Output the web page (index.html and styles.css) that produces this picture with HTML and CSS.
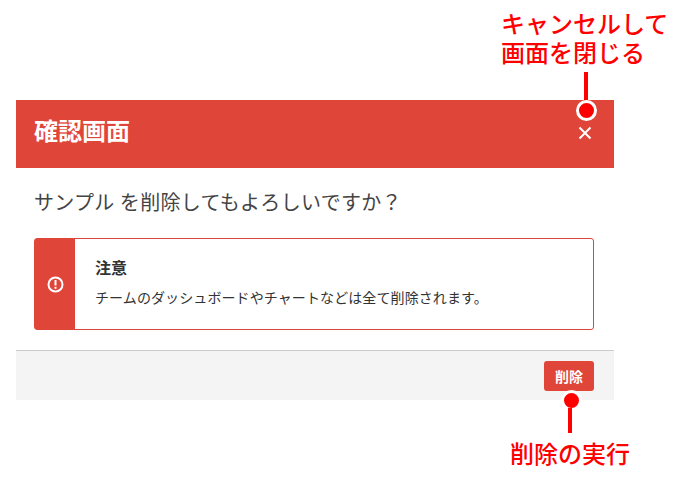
FILE: index.html
```html
<!DOCTYPE html>
<html lang="ja">
<head>
  <meta charset="UTF-8" />
  <meta name="viewport" content="width=device-width, initial-scale=1.0"/>
  <title>確認画面</title>
  <link rel="stylesheet" href="styles.css">
</head>
<body>
  <div class="modal">
    <div class="modal-header">
      <h1>確認画面</h1>
      <svg class="close-icon" width="14" height="14" viewBox="0 0 14 14">
        <path d="M1.5 1.5 L12.5 12.5 M12.5 1.5 L1.5 12.5" stroke="#fff" stroke-width="2" fill="none"/>
      </svg>
    </div>
    <div class="modal-body">
      <p class="question">サンプル を削除してもよろしいですか？</p>
      <div class="alert">
        <div class="alert-side">
          <svg width="17" height="17" viewBox="0 0 17 17">
            <circle cx="8.5" cy="8.5" r="7" stroke="#fff" stroke-width="2" fill="none"/>
            <rect x="7.5" y="4" width="2" height="5.5" fill="#fff"/>
            <rect x="7.5" y="10.8" width="2" height="2" fill="#fff"/>
          </svg>
        </div>
        <div class="alert-text">
          <div class="alert-title">注意</div>
          <div class="alert-desc">チームのダッシュボードやチャートなどは全て削除されます。</div>
        </div>
      </div>
    </div>
    <div class="modal-footer">
      <button class="delete-btn">削除</button>
    </div>
  </div>

  <!-- Annotations -->
  <div class="note note-cancel">キャンセルして<br>画面を閉じる</div>
  <div class="line line-cancel"></div>
  <div class="dot dot-cancel"></div>
  <div class="dot dot-delete"></div>
  <div class="line line-delete"></div>
  <div class="note note-delete">削除の実行</div>
</body>
</html>
```

FILE: styles.css
```css
:root {
  --red: #e04539;
  --mark: #ff0000;
  --font: 'Roboto', 'Noto Sans CJK JP', sans-serif;
}

body {
  margin: 0;
  height: 482px;
  overflow: hidden;
  position: relative;
  background: #fff;
  font-family: var(--font);
  color: #333;
}

.modal {
  width: 598px;
  margin: 100px 0 0 16px;
}

.modal-header {
  height: 68px;
  background: var(--red);
  display: flex;
  align-items: center;
  justify-content: space-between;
  padding: 0 22px 0 18px;
}

.modal-header h1 {
  margin: 0 0 4px;
  font-size: 24px;
  font-weight: 700;
  line-height: 36px;
  color: #fff;
}

.close-icon {
  margin-bottom: 2px;
}

.modal-body {
  height: 182px;
  padding: 0 20px 0 18px;
}

.question {
  margin: 0;
  padding-top: 22px;
  height: 48px;
  font-size: 20px;
  line-height: 27px;
  letter-spacing: 0.3px;
  color: #444;
}

.alert {
  display: flex;
  height: 92px;
  box-sizing: border-box;
  border: 1px solid var(--red);
  border-radius: 3px;
}

.alert-side {
  width: 40px;
  background: var(--red);
  display: flex;
  align-items: center;
  justify-content: center;
}

.alert-text {
  padding: 20px 20px 0;
}

.alert-title {
  font-size: 16px;
  font-weight: 700;
  line-height: 20px;
  margin-bottom: 9px;
}

.alert-desc {
  font-size: 14px;
  line-height: 20px;
  letter-spacing: 0.1px;
}

.modal-footer {
  height: 50px;
  border-top: 1px solid #ccc;
  background: #f4f4f4;
  display: flex;
  justify-content: flex-end;
  padding: 10px 20px 0 0;
  box-sizing: border-box;
}

.delete-btn {
  width: 50px;
  height: 30px;
  border: none;
  border-radius: 3px;
  background: var(--red);
  color: #fff;
  font-family: var(--font);
  font-size: 14px;
  font-weight: 700;
  padding: 0;
}

/* Annotations */
.note {
  position: absolute;
  color: var(--mark);
  font-size: 24px;
  font-weight: 500;
  line-height: 29px;
}

.note-cancel {
  left: 501px;
  top: 11px;
}

.note-delete {
  left: 510px;
  top: 441px;
}

.line {
  position: absolute;
  width: 4px;
  background: var(--mark);
}

.line-cancel {
  left: 584px;
  top: 72px;
  height: 28px;
}

.line-delete {
  left: 568px;
  top: 408px;
  height: 25px;
}

.dot {
  position: absolute;
  box-sizing: border-box;
  border-radius: 50%;
  background: var(--mark);
  border: 3px solid #fff;
}

.dot-cancel {
  left: 576px;
  top: 100px;
  width: 21px;
  height: 21px;
}

.dot-delete {
  left: 561px;
  top: 390px;
  width: 21px;
  height: 21px;
}
```
